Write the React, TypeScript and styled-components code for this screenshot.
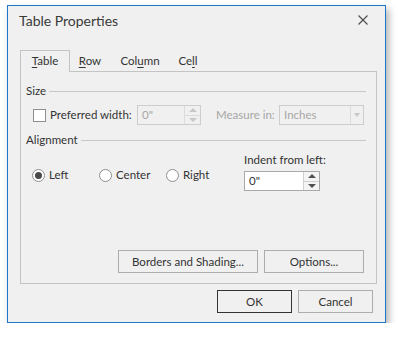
import React from "react";
import styled, { createGlobalStyle } from "styled-components";

const Global = createGlobalStyle`
  html, body { margin: 0; padding: 0; background: #ffffff; }
  body {
    font-family: Lato, "Noto Sans", sans-serif;
    font-size: 11.5px;
    color: #333333;
  }
  * { box-sizing: border-box; }
`;

const Window = styled.div`
  margin: 5px 0 0 7px;
  width: 379px;
  height: 318px;
  border: 1px solid #1e78c8;
  background: #f0f0f0;
  box-shadow: 3px 4px 7px rgba(0, 0, 0, 0.3);
  display: flex;
  flex-direction: column;
`;

const TitleBar = styled.div`
  height: 44px;
  display: flex;
  justify-content: space-between;
  align-items: flex-start;
  padding: 0 17px 0 11px;
`;

const Title = styled.div`
  font-size: 14px;
  line-height: 20px;
  margin-top: 5px;
  color: #3a3a3a;
`;

const Close = styled.svg`
  margin-top: 9px;
  width: 10px;
  height: 10px;
`;

const Body = styled.div`
  padding: 0 8px 0 12px;
  display: flex;
  flex-direction: column;
`;

const TabStrip = styled.div`
  height: 21px;
  display: flex;
  align-items: flex-end;
`;

const Tab = styled.div<{ $active?: boolean; $width: number }>`
  width: ${(p) => p.$width}px;
  height: ${(p) => (p.$active ? "22px" : "21px")};
  margin-bottom: ${(p) => (p.$active ? "-1px" : "0")};
  display: flex;
  align-items: center;
  justify-content: center;
  position: relative;
  z-index: 1;
  background: #f0f0f0;
  border: 1px solid ${(p) => (p.$active ? "#c4c4c4" : "transparent")};
  border-bottom: none;
  line-height: 16px;
  padding-bottom: 1px;
  u { text-underline-offset: 2px; }
`;

const Panel = styled.div`
  height: 213px;
  border: 1px solid #c4c4c4;
  padding: 11px 12px 10px 5px;
  display: flex;
  flex-direction: column;
`;

const SectionHeader = styled.div<{ $gap: number }>`
  height: 16px;
  display: flex;
  align-items: center;
  gap: 3px;
  margin-top: ${(p) => p.$gap}px;
  margin-right: -2px;
  line-height: 16px;
  &::after {
    content: "";
    flex: 1;
    height: 1px;
    background: #c8c8c8;
  }
`;

const SizeRow = styled.div`
  height: 20px;
  margin-top: 6px;
  padding-left: 7px;
  display: flex;
  align-items: center;
`;

const CheckBox = styled.span`
  width: 13px;
  height: 13px;
  border: 1px solid #8f8f8f;
  background: #ffffff;
  flex: none;
`;

const Label = styled.span<{ $width?: number; $disabled?: boolean; $ml?: number }>`
  width: ${(p) => (p.$width ? `${p.$width}px` : "auto")};
  margin-left: ${(p) => p.$ml ?? 0}px;
  color: ${(p) => (p.$disabled ? "#a6a6a6" : "#333333")};
  white-space: nowrap;
  line-height: 16px;
  flex: none;
`;

const Spin = styled.div<{ $width: number; $disabled?: boolean }>`
  width: ${(p) => p.$width}px;
  height: 20px;
  display: flex;
  border: 1px solid ${(p) => (p.$disabled ? "#cdcdcd" : "#a9a9a9")};
  background: ${(p) => (p.$disabled ? "#f0f0f0" : "#ffffff")};
  color: ${(p) => (p.$disabled ? "#a6a6a6" : "#333333")};
  flex: none;
`;

const SpinText = styled.div`
  flex: 1;
  padding-left: 4px;
  line-height: 18px;
`;

const SpinButtons = styled.div<{ $disabled?: boolean }>`
  width: 16px;
  display: flex;
  flex-direction: column;
  border-left: 1px solid ${(p) => (p.$disabled ? "#dcdcdc" : "#cfcfcf")};
  background: ${(p) => (p.$disabled ? "#f0f0f0" : "#f4f4f4")};
`;

const SpinHalf = styled.div<{ $bottom?: boolean; $disabled?: boolean }>`
  flex: 1;
  display: flex;
  align-items: center;
  justify-content: center;
  border-top: ${(p) => (p.$bottom ? `1px solid ${p.$disabled ? "#dcdcdc" : "#cfcfcf"}` : "none")};
  &::before {
    content: "";
    border-left: 4px solid transparent;
    border-right: 4px solid transparent;
    ${(p) =>
      p.$bottom
        ? `border-top: 4px solid ${p.$disabled ? "#c8c8c8" : "#505050"};`
        : `border-bottom: 4px solid ${p.$disabled ? "#c8c8c8" : "#505050"};`}
  }
`;

const Combo = styled.div`
  width: 85px;
  height: 20px;
  display: flex;
  border: 1px solid #cdcdcd;
  color: #a6a6a6;
  flex: none;
`;

const ComboButton = styled.div`
  width: 13px;
  border-left: 1px solid #dcdcdc;
  display: flex;
  align-items: center;
  justify-content: center;
  &::before {
    content: "";
    border-left: 3.5px solid transparent;
    border-right: 3.5px solid transparent;
    border-top: 4px solid #c8c8c8;
  }
`;

const AlignContent = styled.div`
  display: flex;
  margin-top: 4px;
`;

const RadioGroup = styled.div`
  display: flex;
  margin-top: 15px;
  padding-left: 6px;
  height: 16px;
`;

const RadioItem = styled.div`
  width: 67px;
  display: flex;
  align-items: center;
  gap: 4px;
  line-height: 16px;
`;

const Radio = styled.span<{ $checked?: boolean }>`
  width: 13px;
  height: 13px;
  border-radius: 50%;
  border: 1px solid #8f8f8f;
  background: #ffffff;
  display: flex;
  align-items: center;
  justify-content: center;
  flex: none;
  &::before {
    content: "";
    width: 7px;
    height: 7px;
    border-radius: 50%;
    background: ${(p) => (p.$checked ? "#4a4a4a" : "transparent")};
  }
`;

const IndentColumn = styled.div`
  margin-left: 11px;
  display: flex;
  flex-direction: column;
  gap: 3px;
`;

const ButtonRow = styled.div`
  margin-top: auto;
  display: flex;
  justify-content: flex-end;
  gap: 6px;
`;

const Button = styled.div<{ $width: number; $default?: boolean }>`
  width: ${(p) => p.$width}px;
  height: 23px;
  border: 1px solid ${(p) => (p.$default ? "#333333" : "#adadad")};
  display: flex;
  align-items: center;
  justify-content: center;
  line-height: 16px;
  color: #333333;
`;

const Footer = styled.div`
  margin-top: 6px;
  padding: 0 12px 0 0;
  display: flex;
  justify-content: flex-end;
  gap: 6px;
`;

function SpinEdit({ value, width, disabled }: { value: string; width: number; disabled?: boolean }) {
  return (
    <Spin $width={width} $disabled={disabled}>
      <SpinText>{value}</SpinText>
      <SpinButtons $disabled={disabled}>
        <SpinHalf $disabled={disabled} />
        <SpinHalf $bottom $disabled={disabled} />
      </SpinButtons>
    </Spin>
  );
}

export default function App() {
  return (
    <>
      <Global />
      <Window>
        <TitleBar>
          <Title>Table Properties</Title>
          <Close viewBox="0 0 10 10">
            <path d="M0.5 0.5 L9.5 9.5 M9.5 0.5 L0.5 9.5" stroke="#4a4a4a" strokeWidth="1.1" fill="none" />
          </Close>
        </TitleBar>
        <Body>
          <TabStrip>
            <Tab $active $width={50}>
              <span><u>T</u>able</span>
            </Tab>
            <Tab $width={40}>
              <span><u>R</u>ow</span>
            </Tab>
            <Tab $width={60}>
              <span>Col<u>u</u>mn</span>
            </Tab>
            <Tab $width={36}>
              <span>Ce<u>l</u>l</span>
            </Tab>
          </TabStrip>
          <Panel>
            <SectionHeader $gap={0}>Size</SectionHeader>
            <SizeRow>
              <CheckBox />
              <Label $ml={4} $width={87}>Preferred width:</Label>
              <SpinEdit value={'0"'} width={64} disabled />
              <Label $ml={15} $width={63} $disabled>Measure in:</Label>
              <Combo>
                <SpinText>Inches</SpinText>
                <ComboButton />
              </Combo>
            </SizeRow>
            <SectionHeader $gap={7}>Alignment</SectionHeader>
            <AlignContent>
              <RadioGroup>
                <RadioItem>
                  <Radio $checked />
                  Left
                </RadioItem>
                <RadioItem>
                  <Radio />
                  Center
                </RadioItem>
                <RadioItem>
                  <Radio />
                  Right
                </RadioItem>
              </RadioGroup>
              <IndentColumn>
                <Label>Indent from left:</Label>
                <SpinEdit value={'0"'} width={76} />
              </IndentColumn>
            </AlignContent>
            <ButtonRow>
              <Button $width={140}>Borders and Shading...</Button>
              <Button $width={100}>Options...</Button>
            </ButtonRow>
          </Panel>
        </Body>
        <Footer>
          <Button $width={75} $default>OK</Button>
          <Button $width={75}>Cancel</Button>
        </Footer>
      </Window>
    </>
  );
}
